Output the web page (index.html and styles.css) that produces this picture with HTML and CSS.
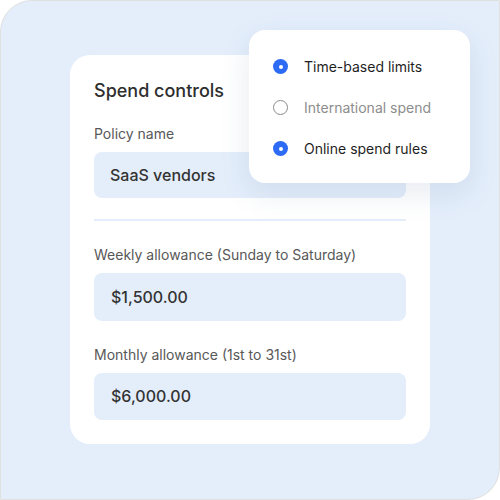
FILE: index.html
```html
<!DOCTYPE html>
<html>
<head>
<meta charset="utf-8">
<link rel="stylesheet" href="styles.css">
</head>
<body>
<div class="panel">
  <div class="card">
    <h1 class="title">Spend controls</h1>
    <div class="label label-first">Policy name</div>
    <div class="field">SaaS vendors</div>
    <div class="divider"></div>
    <div class="label">Weekly allowance (Sunday to Saturday)</div>
    <div class="field field-num">$1,500.00</div>
    <div class="label label-gap">Monthly allowance (1st to 31st)</div>
    <div class="field field-num">$6,000.00</div>
  </div>
  <div class="popup">
    <div class="option"><span class="radio on"></span><span class="opt-text">Time-based limits</span></div>
    <div class="option muted"><span class="radio"></span><span class="opt-text">International spend</span></div>
    <div class="option"><span class="radio on"></span><span class="opt-text">Online spend rules</span></div>
  </div>
</div>
</body>
</html>
```
FILE: styles.css
```css
* { box-sizing: border-box; }
html, body { margin: 0; padding: 0; }
body {
  width: 500px;
  height: 500px;
  background: #ffffff;
  font-family: Inter, "Noto Sans", sans-serif;
  color: #333333;
}
.panel {
  position: relative;
  width: 500px;
  height: 500px;
  background: #e4eefb;
  border: 1px solid #e0e0e0;
  border-radius: 32px 0 32px 0;
  padding: 54px 0 0 69px;
}
.card {
  width: 360px;
  height: 389px;
  background: #ffffff;
  border-radius: 20px;
  padding: 24px 24px 24px 24px;
  display: flex;
  flex-direction: column;
}
.title {
  margin: 0;
  font-size: 18px;
  line-height: 24px;
  font-weight: 500;
  color: #2e2e2e;
}
.label {
  font-size: 14px;
  line-height: 20px;
  color: #585858;
  margin-top: 24px;
  margin-bottom: 8px;
}
.label-first { margin-top: 21px; margin-bottom: 8px; }
.label-gap { margin-top: 24px; margin-bottom: 8px; }
.field {
  height: 47px;
  background: #e4eefb;
  border-radius: 8px;
  padding-left: 16px;
  display: flex;
  align-items: center;
  font-size: 16px;
  font-weight: 500;
  color: #333333;
}
.field-num { height: 48px; padding-left: 17px; }
.divider {
  height: 2px;
  background: #e4eefb;
  margin-top: 21px;
}
.popup {
  position: absolute;
  left: 248px;
  top: 29px;
  width: 221px;
  height: 153px;
  background: #ffffff;
  border-radius: 16px;
  box-shadow: 0 10px 30px rgba(60, 90, 140, 0.12);
  padding: 16px 0 0 24px;
}
.option {
  height: 41px;
  display: flex;
  align-items: center;
  gap: 16px;
  font-size: 14px;
  color: #1f1f1f;
}
.option.muted { color: #8d8d8d; }
.radio {
  width: 15px;
  height: 15px;
  border-radius: 50%;
  border: 1.5px solid #8a8a8a;
  flex: none;
  display: flex;
  align-items: center;
  justify-content: center;
}
.radio.on {
  border: none;
  background: #2d6bf5;
}
.radio.on::after {
  content: "";
  width: 4px;
  height: 4px;
  border-radius: 50%;
  background: #ffffff;
}
```
